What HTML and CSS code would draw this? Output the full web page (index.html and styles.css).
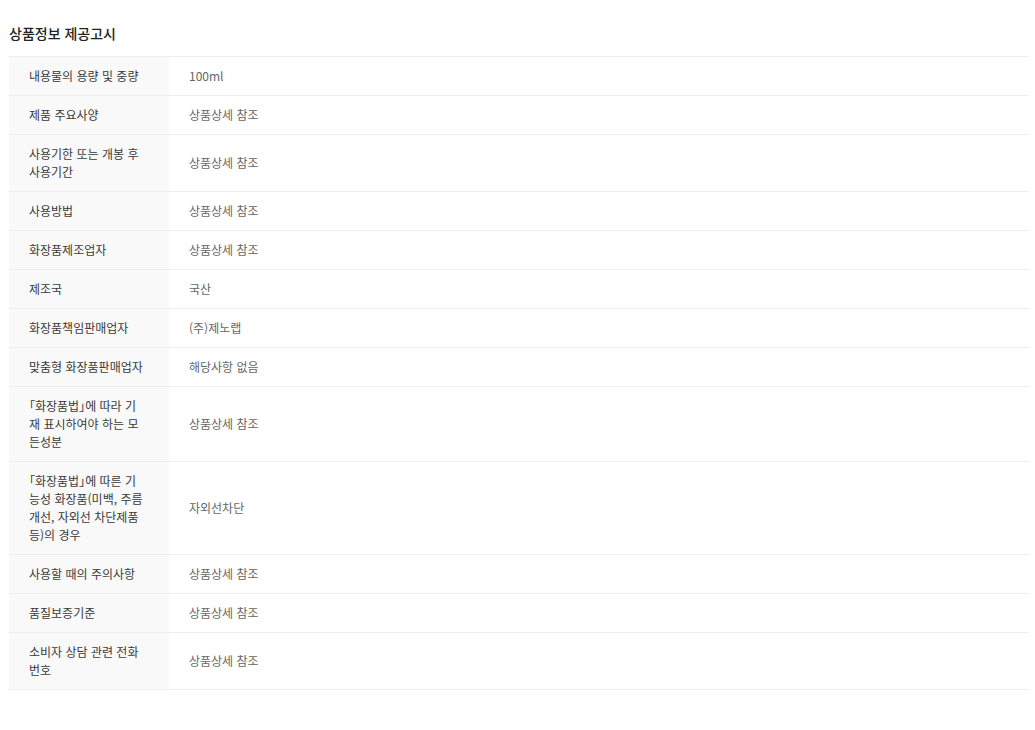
FILE: index.html
```html
<!DOCTYPE html>
<html lang="ko">
<head>
    <meta charset="UTF-8">
    <meta name="viewport" content="width=device-width, initial-scale=1.0">
    <title>상품정보 제공고시</title>
    <link rel="stylesheet" href="styles.css">
</head>
<body>

    <div class="notice">
        <h3>상품정보 제공고시</h3>

        <!-- 상품정보 표 -->
        <table class="notice-table">
            <tbody>
                <tr><th>내용물의 용량 및 중량</th><td>100ml</td></tr>
                <tr><th>제품 주요사양</th><td>상품상세 참조</td></tr>
                <tr><th>사용기한 또는 개봉 후 사용기간</th><td>상품상세 참조</td></tr>
                <tr><th>사용방법</th><td>상품상세 참조</td></tr>
                <tr><th>화장품제조업자</th><td>상품상세 참조</td></tr>
                <tr><th>제조국</th><td>국산</td></tr>
                <tr><th>화장품책임판매업자</th><td>(주)제노랩</td></tr>
                <tr><th>맞춤형 화장품판매업자</th><td>해당사항 없음</td></tr>
                <tr><th class="law">「화장품법」에 따라 기재 표시하여야 하는 모든성분</th><td>상품상세 참조</td></tr>
                <tr><th class="law">「화장품법」에 따른 기능성 화장품(미백, 주름 개선, 자외선 차단제품 등)의 경우</th><td>자외선차단</td></tr>
                <tr><th>사용할 때의 주의사항</th><td>상품상세 참조</td></tr>
                <tr><th>품질보증기준</th><td>상품상세 참조</td></tr>
                <tr><th>소비자 상담 관련 전화 번호</th><td>상품상세 참조</td></tr>
            </tbody>
        </table>
    </div>

</body>
</html>
```

FILE: styles.css
```css
body {
    font-family: "Noto Sans CJK KR", "Noto Sans", sans-serif;
    background-color: #ffffff;
    margin: 0;
    padding: 0;
    color: #333;
}
.notice {
    padding: 23px 6px 0 9px;
}
.notice h3 {
    margin: 0 0 13px;
    font-size: 14px;
    font-weight: 500;
    line-height: 20px;
    color: #222;
}
.notice-table {
    width: 100%;
    border-collapse: collapse;
    border-top: 1px solid #eee;
    font-size: 12px;
    line-height: 18px;
}
.notice-table tr {
    border-bottom: 1px solid #eee;
}
.notice-table th {
    width: 116px;
    padding: 10px 24px 10px 20px;
    background-color: #f9f9f9;
    text-align: left;
    font-weight: normal;
    color: #3a3a3a;
    vertical-align: middle;
}
/* 낫표는 반각으로 */
.notice-table th.law {
    font-feature-settings: "palt";
}
.notice-table td {
    padding: 10px 20px;
    color: #666;
    vertical-align: middle;
}
```
